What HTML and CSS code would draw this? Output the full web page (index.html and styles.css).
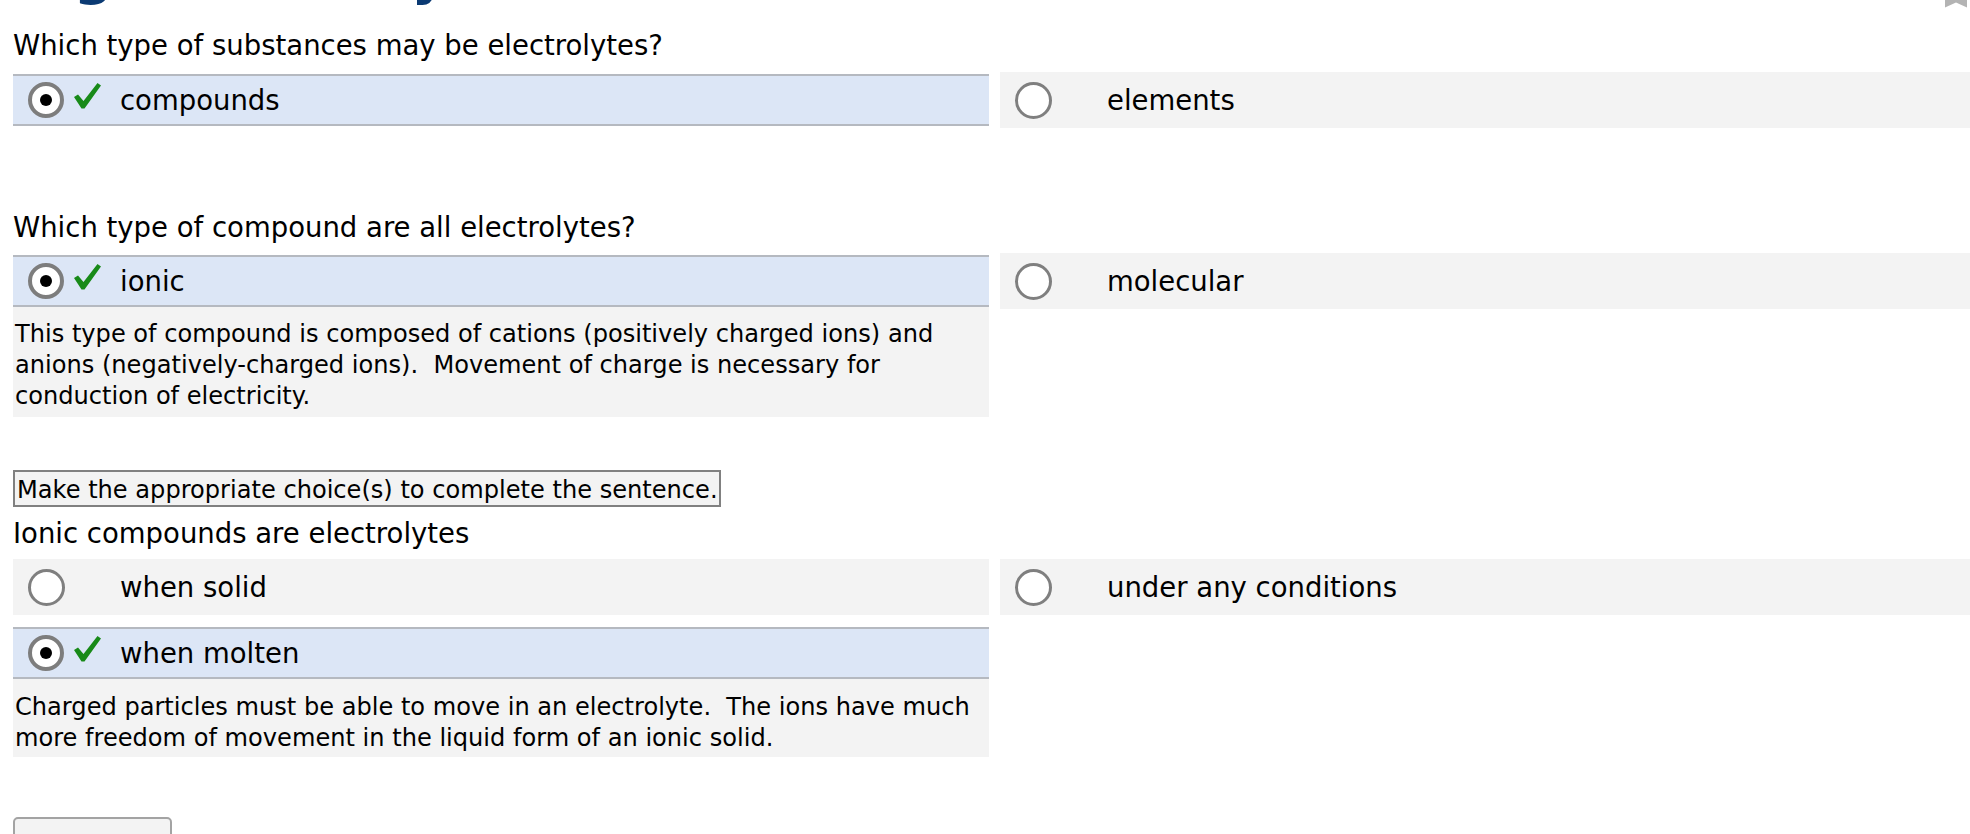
FILE: index.html
```html
<!DOCTYPE html>
<html lang="en">
<head>
<meta charset="utf-8">
<title>Electrolytes</title>
<link rel="stylesheet" href="styles.css">
</head>
<body>
<div class="page">
  <h1 class="title">Big Chemistry</h1>
  <svg class="bookmark" width="22" height="8" viewBox="0 0 22 8"><polygon points="0,0 22,0 22,7.5 11,2.5 0,7.5" fill="#b3b3b3"/></svg>

  <section class="question q1">
    <p class="prompt">Which type of substances may be electrolytes?</p>
    <div class="choices">
      <div class="col">
        <div class="choice selected">
          <span class="marker"><span class="radio on"></span><svg class="check" width="27" height="26" viewBox="0 0 27 26"><polygon points="0,14 4,11.5 9.5,18 23.5,0 27,2.5 10.5,25.5 7.5,25.5" fill="#188a18"/></svg></span>
          <span class="label">compounds</span>
        </div>
      </div>
      <div class="col">
        <div class="choice">
          <span class="marker"><span class="radio"></span></span>
          <span class="label">elements</span>
        </div>
      </div>
    </div>
  </section>

  <section class="question q2">
    <p class="prompt">Which type of compound are all electrolytes?</p>
    <div class="choices">
      <div class="col">
        <div class="choice selected">
          <span class="marker"><span class="radio on"></span><svg class="check" width="27" height="26" viewBox="0 0 27 26"><polygon points="0,14 4,11.5 9.5,18 23.5,0 27,2.5 10.5,25.5 7.5,25.5" fill="#188a18"/></svg></span>
          <span class="label">ionic</span>
        </div>
        <div class="feedback">This type of compound is composed of cations (positively charged ions) and<br>anions (negatively-charged ions).&nbsp; Movement of charge is necessary for<br>conduction of electricity.</div>
      </div>
      <div class="col">
        <div class="choice">
          <span class="marker"><span class="radio"></span></span>
          <span class="label">molecular</span>
        </div>
      </div>
    </div>
  </section>

  <section class="question q3">
    <div class="instruction">Make the appropriate choice(s) to complete the sentence.</div>
    <p class="prompt">Ionic compounds are electrolytes</p>
    <div class="choices">
      <div class="col">
        <div class="choice">
          <span class="marker"><span class="radio"></span></span>
          <span class="label">when solid</span>
        </div>
        <div class="choice selected">
          <span class="marker"><span class="radio on"></span><svg class="check" width="27" height="26" viewBox="0 0 27 26"><polygon points="0,14 4,11.5 9.5,18 23.5,0 27,2.5 10.5,25.5 7.5,25.5" fill="#188a18"/></svg></span>
          <span class="label">when molten</span>
        </div>
        <div class="feedback">Charged particles must be able to move in an electrolyte.&nbsp; The ions have much<br>more freedom of movement in the liquid form of an ionic solid.</div>
      </div>
      <div class="col">
        <div class="choice">
          <span class="marker"><span class="radio"></span></span>
          <span class="label">under any conditions</span>
        </div>
      </div>
    </div>
  </section>

  <button class="submit" type="button">Submit</button>
</div>
</body>
</html>
```

FILE: styles.css
```css
html {
  overflow: hidden;
  background: #ffffff;
}

body {
  margin: 0;
  padding: 0;
  font-family: "DejaVu Sans", Verdana, sans-serif;
  color: #000000;
}

.page {
  display: flow-root;
  position: relative;
  padding: 0 0 0 13px;
  width: 1957px;
}

.title {
  margin: -59.5px 0 0 0;
  font-size: 55px;
  line-height: 66px;
  font-weight: bold;
  color: #0b3a73;
  white-space: nowrap;
}

.bookmark {
  position: absolute;
  top: 0;
  right: 3px;
}

.question {
  margin: 0;
}

.prompt {
  margin: 0;
  font-size: 27.5px;
  line-height: 33px;
  white-space: nowrap;
}

.q1 .prompt {
  margin-top: 22.5px;
}

.q2 .prompt {
  margin-top: 82.5px;
}

.q3 .prompt {
  margin-top: 10px;
}

.choices {
  display: grid;
  grid-template-columns: 976px 976px;
  column-gap: 11px;
  align-items: start;
  margin-top: 10px;
}

.q2 .choices {
  margin-top: 9.5px;
}

.q3 .choices {
  margin-top: 9px;
}

.col {
  display: flex;
  flex-direction: column;
}

.col .choice + .choice {
  margin-top: 10px;
}

.col .choice + .choice.selected {
  margin-top: 12px;
}

.choice {
  box-sizing: border-box;
  height: 56px;
  display: flex;
  align-items: center;
  padding-left: 15px;
  background: #f3f3f3;
}

.choice.selected {
  height: 52px;
  margin-top: 2px;
  background: #dce6f6;
  border-top: 2px solid #b5b9c0;
  border-bottom: 2px solid #b5b9c0;
}

.marker {
  width: 92px;
  flex: none;
  display: flex;
  align-items: center;
}

.radio {
  box-sizing: border-box;
  width: 37px;
  height: 37px;
  border: 3px solid #7f7f7f;
  border-radius: 50%;
  background: #ffffff;
  flex: none;
  display: flex;
  align-items: center;
  justify-content: center;
}

.radio.on {
  width: 36px;
  height: 36px;
  border: 4px solid #7d7d7d;
}

.radio.on::after {
  content: "";
  width: 12px;
  height: 12px;
  border-radius: 50%;
  background: #000000;
}

.check {
  margin-left: 10px;
  margin-bottom: 8px;
  flex: none;
}

.label {
  font-size: 27.5px;
  line-height: 33px;
  white-space: nowrap;
}

.feedback {
  background: #f3f3f3;
  padding: 12px 2px 6px 2px;
  font-size: 24.1px;
  line-height: 30.8px;
  white-space: nowrap;
}

.q3 .feedback {
  padding: 12.5px 2px 4px 2px;
}

.instruction {
  display: inline-block;
  margin-top: 53px;
  border: 2px solid #808080;
  background: #f3f3f3;
  padding: 3px 1px 0 2px;
  font-size: 24.1px;
  line-height: 30px;
  white-space: nowrap;
}

.submit {
  display: block;
  margin-top: 60px;
  box-sizing: border-box;
  width: 159px;
  height: 62px;
  padding: 30px 0 0 0;
  border: 2px solid #a3a3a3;
  border-radius: 5px;
  background: #f3f3f3;
  font-family: "DejaVu Sans", Verdana, sans-serif;
  font-size: 24.1px;
  color: #000000;
}
```
